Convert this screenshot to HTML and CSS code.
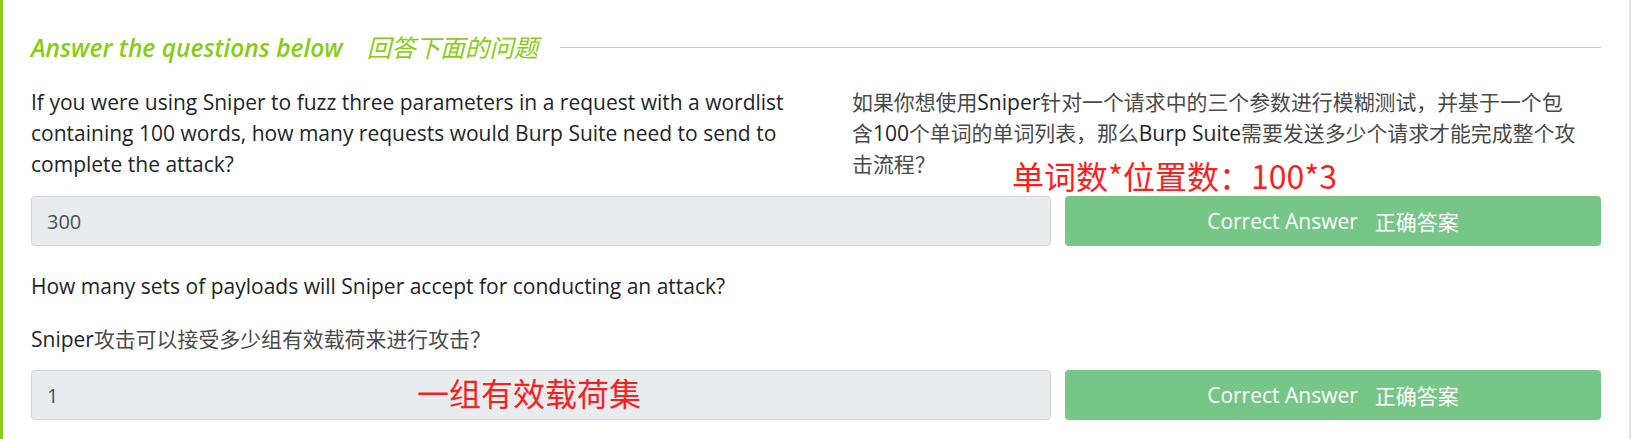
FILE: index.html
```html
<!DOCTYPE html>
<html lang="zh-CN">
<head>
<meta charset="utf-8">
<title>Answer the questions below</title>
<link rel="stylesheet" href="styles.css">
</head>
<body>
<div class="card">
  <div class="head">
    <h2 class="title"><span class="title-en">Answer the questions below</span><span class="title-zh">回答下面的问题</span></h2>
    <div class="rule"></div>
  </div>

  <div class="q q1">
    <div class="cols">
      <p class="text">If you were using Sniper to fuzz three parameters in a request with a wordlist<br>containing 100 words, how many requests would Burp Suite need to send to<br>complete the attack?</p>
      <p class="text"><span class="zh">如果你想使用</span>Sniper<span class="zh">针对一个请求中的三个参数进行模糊测试，并基于一个包</span><br><span class="zh">含</span>100<span class="zh">个单词的单词列表，那么</span>Burp Suite<span class="zh">需要发送多少个请求才能完成整个攻</span><br><span class="zh">击流程？</span></p>
    </div>
    <div class="answer">
      <div class="input">300</div>
      <div class="btn">Correct Answer<span class="btn-zh">正确答案</span></div>
    </div>
  </div>

  <div class="q q2">
    <p class="text">How many sets of payloads will Sniper accept for conducting an attack?</p>
    <p class="text text-zh">Sniper<span class="zh">攻击可以接受多少组有效载荷来进行攻击？</span></p>
    <div class="answer">
      <div class="input">1</div>
      <div class="btn">Correct Answer<span class="btn-zh">正确答案</span></div>
    </div>
  </div>

  <span class="note note1">单词数*位置数：100*3</span>
  <span class="note note2">一组有效载荷集</span>
</div>
</body>
</html>
```

FILE: styles.css
```css
body {
  margin: 0;
  background: #fff;
  font-family: "Open Sans", "Noto Sans CJK SC", sans-serif;
  color: #212529;
}

.card {
  position: relative;
  box-sizing: border-box;
  width: 1631px;
  height: 439px;
  border-left: 3px solid #88cc14;
  border-right: 2px solid #e4e4e4;
  padding: 32px 28px 0;
}

.head {
  display: flex;
  align-items: center;
  height: 30px;
}

.title {
  margin: 0;
  font-size: 24.5px;
  font-style: italic;
  font-weight: 600;
  line-height: 30px;
  color: #88cc14;
  white-space: nowrap;
}

.title-zh {
  margin-left: 24px;
  font-family: "Noto Sans CJK SC", sans-serif;
  font-weight: 400;
  font-size: 24.5px;
}

.rule {
  flex: 1;
  height: 1px;
  margin-left: 22px;
  background: #c8c8c8;
}

.cols {
  display: grid;
  grid-template-columns: 785px 1fr;
  column-gap: 36px;
  margin-top: 25px;
}

.text {
  margin: 0;
  font-size: 21px;
  line-height: 31px;
  white-space: nowrap;
}

.zh {
  font-family: "Noto Sans CJK SC", sans-serif;
  font-size: 20.9px;
  line-height: 20px;
  color: #4a4a4a;
}

.answer {
  display: grid;
  grid-template-columns: 1fr 536px;
  column-gap: 14px;
  margin-top: 16px;
}

.input {
  box-sizing: border-box;
  height: 50px;
  display: flex;
  align-items: center;
  padding: 0 15px;
  border: 1px solid #ced4da;
  border-radius: 4px;
  background: #e9ecef;
  color: #495057;
  font-size: 20px;
}

.btn {
  height: 50px;
  display: flex;
  align-items: center;
  justify-content: center;
  border-radius: 4px;
  background: #75c687;
  color: #fff;
  font-size: 21px;
  font-weight: 500;
}

.btn-zh {
  margin-left: 17px;
  font-family: "Noto Sans CJK SC", sans-serif;
  font-size: 21px;
  font-weight: 400;
}

.q2 {
  margin-top: 25px;
}

.q2 .text-zh {
  margin-top: 22px;
}

.q2 .answer {
  margin-top: 15px;
}

.note {
  position: absolute;
  font-family: "Noto Sans CJK SC", sans-serif;
  font-size: 32px;
  line-height: 40px;
  color: #fa1e1e;
  white-space: nowrap;
}

.note1 {
  left: 1009px;
  top: 155px;
}

.note2 {
  left: 414px;
  top: 372px;
}
```
